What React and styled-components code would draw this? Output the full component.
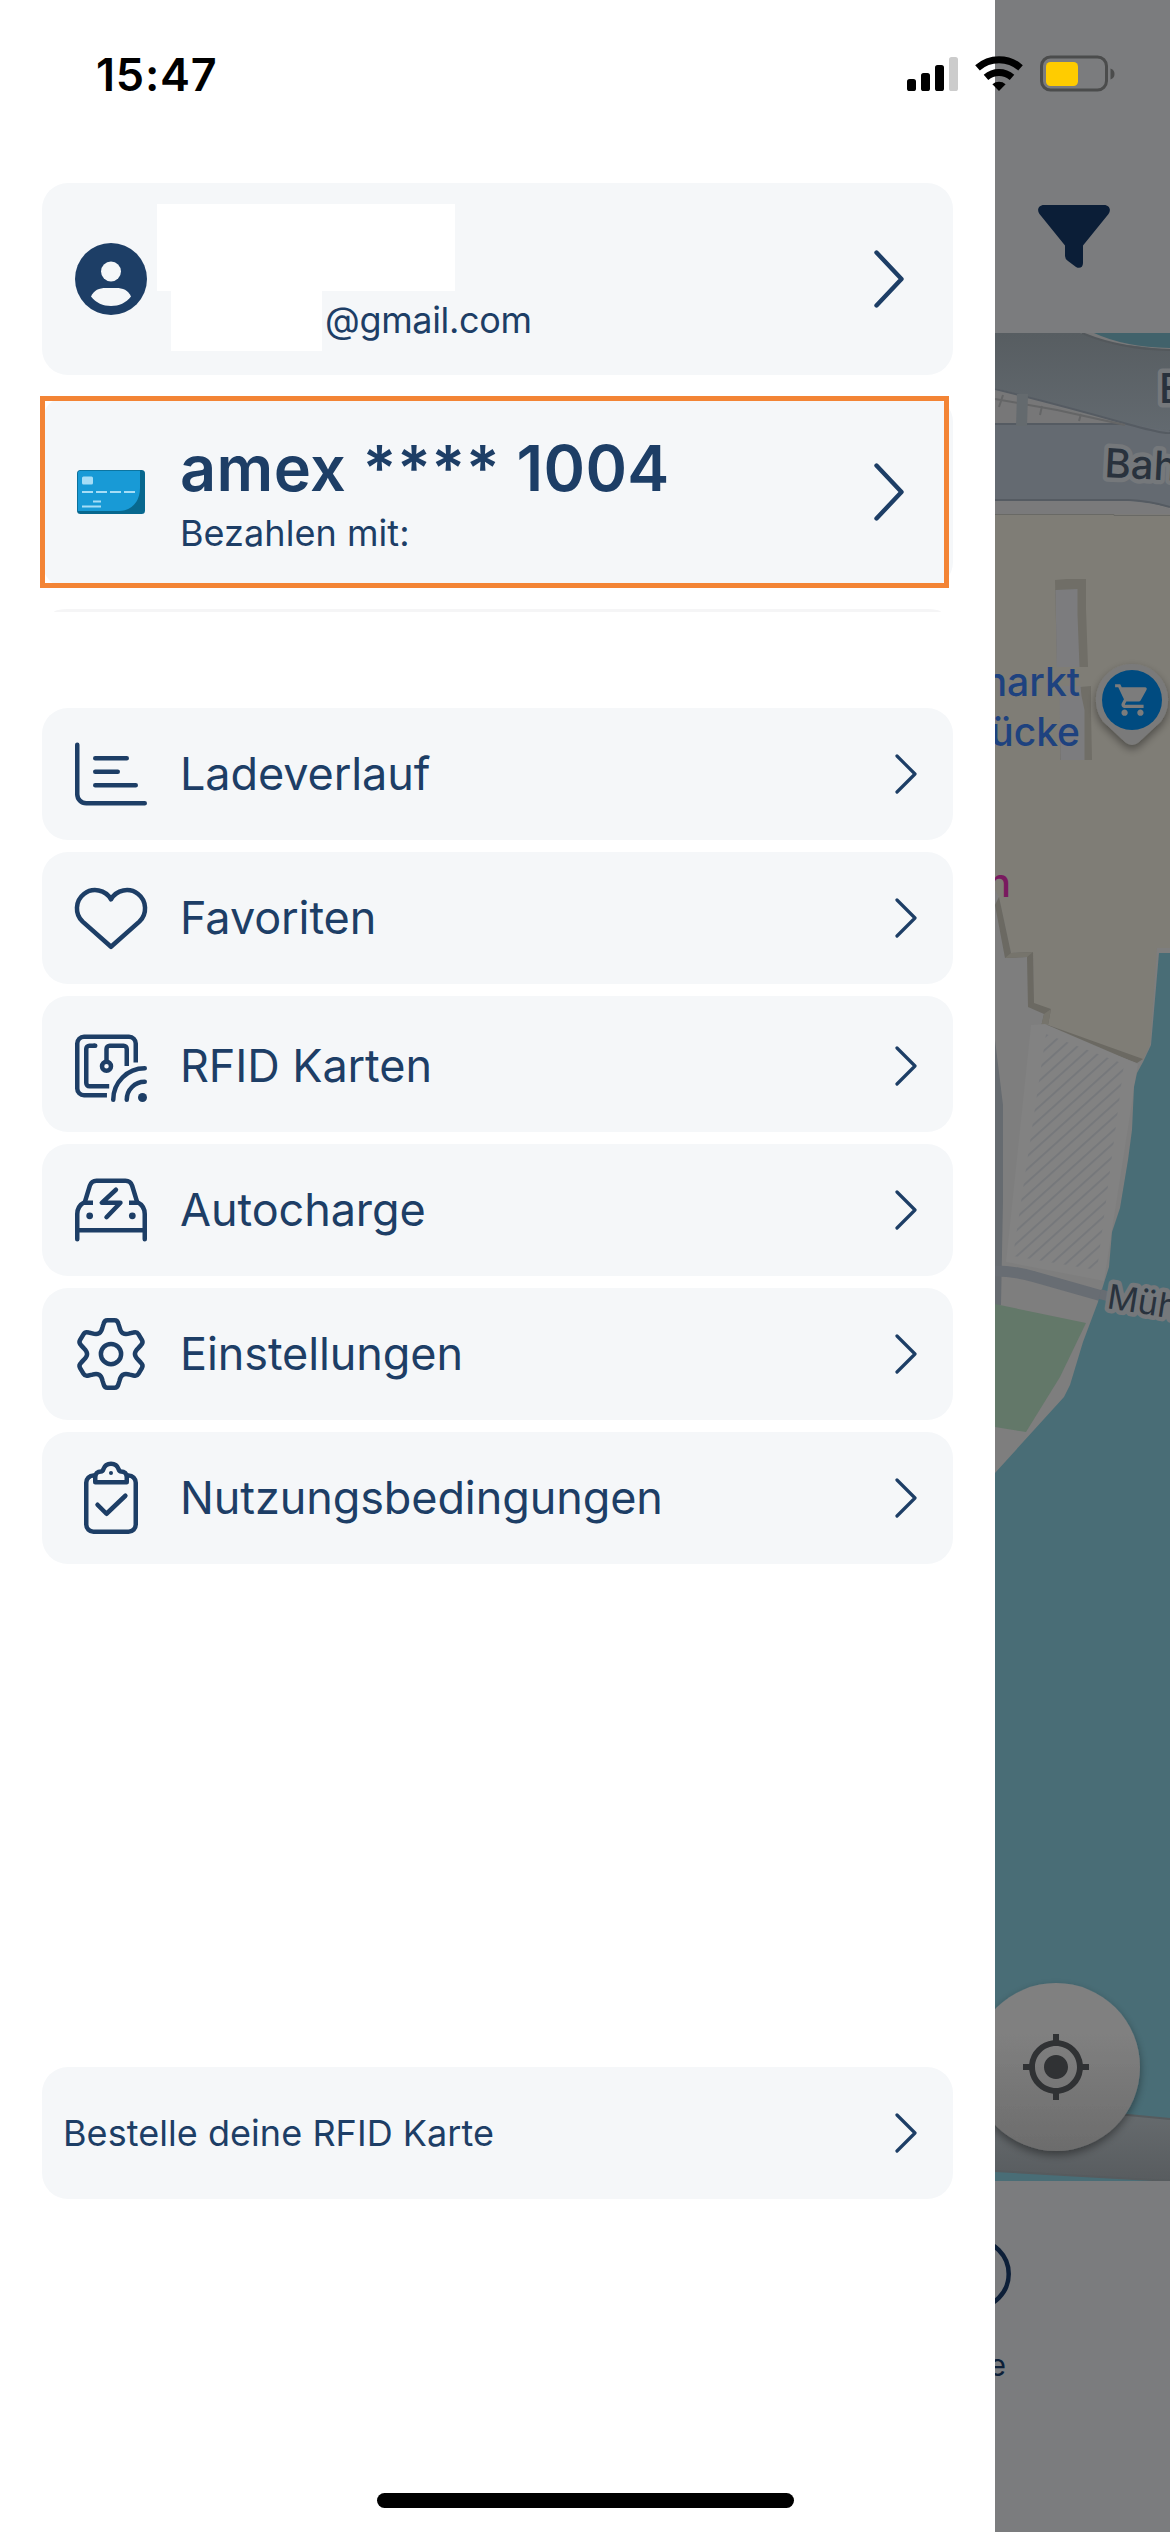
import React from "react";
import styled, { createGlobalStyle } from "styled-components";
import { MdMyLocation, MdShoppingCart } from "react-icons/md";

const NAVY = "#1d3e66";

// one tooth of the cog, repeated every 60 degrees around the origin
const cogPath = (() => {
  const tooth = [
    ["L", [-1.9, -5.9]],
    ["L", [-1.65, -6.7]],
    ["Q", [-1.45, -7.5], [-0.8, -7.5]],
    ["L", [0.8, -7.5]],
    ["Q", [1.45, -7.5], [1.65, -6.7]],
    ["L", [1.9, -5.9]],
    ["Q", [2.1, -4.95], [2.65, -4.6]],
    ["Q", [3.24, -4.3], [4.16, -4.6]],
  ];
  let d = "";
  for (let i = 0; i < 6; i++) {
    const a = (i * Math.PI) / 3;
    tooth.forEach(([cmd, ...pts], j) => {
      const list = pts
        .map(([x, y]) => [
          (x * Math.cos(a) - y * Math.sin(a)).toFixed(3),
          (x * Math.sin(a) + y * Math.cos(a)).toFixed(3),
        ])
        .join(" ");
      d += (i === 0 && j === 0 ? "M" : cmd) + list;
    });
  }
  return d + "Z";
})();

function LineIcon({ children }) {
  return (
    <IconSvg viewBox="0 0 16 16" fill="none" stroke={NAVY} strokeLinecap="round" strokeLinejoin="round">
      {children}
    </IconSvg>
  );
}

const icons = {
  chart: (
    <LineIcon>
      <path d="M.5 1.5v11a2 2 0 0 0 2 2h13M4.5 4.5h7M4.5 7.5h5M4.5 10.5h9" />
    </LineIcon>
  ),
  heart: (
    <LineIcon>
      <path d="M8 14.4L1.7 8.8A4.05 4.05 0 1 1 8 3.85A4.05 4.05 0 1 1 14.3 8.8Z" />
    </LineIcon>
  ),
  rfid: (
    <LineIcon>
      <path
        strokeLinecap="butt"
        d="M13.5 7.2V3A1.5 1.5 0 0 0 12 1.5H2A1.5 1.5 0 0 0 .5 3v10A1.5 1.5 0 0 0 2 14.5h5.1M7.6 12.5H3.2a.7.7 0 0 1-.7-.7V4.2a.7.7 0 0 1 .7-.7h1.3M7 7V4.2a.7.7 0 0 1 .7-.7h3.1a.7.7 0 0 1 .7.7V8"
      />
      <path d="M4.3 3.5h.2M15.5 8.5a7 7 0 0 0-7 7M15.5 11.5a4 4 0 0 0-4 4" />
      <circle cx="7" cy="8.05" r="1" />
      <circle cx="15" cy="15" r="1" fill={NAVY} stroke="none" />
    </LineIcon>
  ),
  car: (
    <LineIcon>
      <path d="M.5 14.5V8.9C.5 7.4 1.2 6.7 2.2 6.2L3.3 2.6A1.6 1.6 0 0 1 4.8 1.5h6.4a1.6 1.6 0 0 1 1.5 1.1l1.1 3.6c1 .5 1.7 1.2 1.7 2.7v5.6" />
      <path strokeLinecap="butt" d="M.5 12.5h15M2 6.4h2M12 6.4h2" />
      <path d="M9.1 3.5L5.95 6.4h4.15L7 9.6" />
      <circle cx="3.26" cy="9.3" r=".75" fill={NAVY} stroke="none" />
      <circle cx="12.74" cy="9.3" r=".75" fill={NAVY} stroke="none" />
    </LineIcon>
  ),
  cog: (
    <LineIcon>
      <path d={cogPath} transform="translate(8 8)" />
      <circle cx="8" cy="8" r="2.25" />
    </LineIcon>
  ),
  clipboard: (
    <LineIcon>
      <path d="M4.5 3h-.4A1.6 1.6 0 0 0 2.5 4.6v9.3a1.6 1.6 0 0 0 1.6 1.6h7.8a1.6 1.6 0 0 0 1.6-1.6V4.6A1.6 1.6 0 0 0 11.9 3h-.4" />
      <path d="M4.5 4.5V3.3c0-.7.5-1.2 1.3-1.2.2 0 .4-.2.5-.5a1.8 1.8 0 0 1 3.4 0c.1.3.3.5.5.5.8 0 1.3.5 1.3 1.2v1.2Z" />
      <path d="M5 9.5l2 2 4.2-4" />
      <circle cx="8" cy="2.45" r=".45" fill={NAVY} stroke="none" />
    </LineIcon>
  ),
};

const menu = [
  { label: "Ladeverlauf", icon: "chart" },
  { label: "Favoriten", icon: "heart" },
  { label: "RFID Karten", icon: "rfid", tall: true },
  { label: "Autocharge", icon: "car" },
  { label: "Einstellungen", icon: "cog" },
  { label: "Nutzungsbedingungen", icon: "clipboard" },
];

function Chevron({ large }) {
  return large ? (
    <ChevronSvg $w={30} $h={58} $right={49} viewBox="0 0 30 58">
      <path d="M2.5 2.5L27.5 29L2.5 55.5" strokeWidth="4.4" />
    </ChevronSvg>
  ) : (
    <ChevronSvg $w={22} $h={40} $right={36} viewBox="0 0 22 40">
      <path d="M2 2L20 20L2 38" strokeWidth="3.2" />
    </ChevronSvg>
  );
}

function StatusBar() {
  return (
    <Status>
      <Time>15:47</Time>
      <svg width="206" height="38" viewBox="0 0 206 38">
        <rect x="1" y="25" width="9" height="12" rx="2.6" />
        <rect x="15" y="19" width="9" height="18" rx="2.6" />
        <rect x="29" y="11" width="9" height="26" rx="2.6" />
        <rect x="43" y="3" width="9" height="34" rx="2.6" fill="#cccccc" />
        <g fill="none" stroke="#000" strokeWidth="7">
          <path d="M71.5 13.8a32.5 32.5 0 0 1 43 0" />
          <path d="M80 23.3a20 20 0 0 1 26 0" />
        </g>
        <path d="M93 37l-6.6-6.8a10 10 0 0 1 13.2 0Z" />
        <rect x="135.5" y="3" width="65" height="33" rx="9" fill="none" stroke="#4b4c4c" strokeWidth="3" />
        <rect x="140" y="8" width="32" height="24" rx="4.5" fill="#ffcc00" />
        <path d="M204.5 14.5v11c3-1 4-3.2 4-5.5s-1-4.5-4-5.5" fill="#4b4c4c" />
      </svg>
    </Status>
  );
}

function CityMap() {
  return (
    <MapSvg viewBox="995 333 175 1848" width="175" height="1848">
      <defs>
        <pattern id="hatch" width="9.6" height="9.6" patternUnits="userSpaceOnUse" patternTransform="rotate(48)">
          <rect width="2" height="9.6" fill="#76787b" />
        </pattern>
        <linearGradient id="road" x1="0" y1="0" x2="0" y2="1">
          <stop offset="0" stopColor="#575d61" />
          <stop offset="1" stopColor="#636a70" />
        </linearGradient>
        <linearGradient id="quay" x1="0" y1="0" x2="0" y2="1">
          <stop offset="0" stopColor="#696e71" />
          <stop offset="1" stopColor="#585c5f" />
        </linearGradient>
        <linearGradient id="fab" x1="0" y1="0" x2="0" y2="1">
          <stop offset=".3" stopColor="#808080" />
          <stop offset="1" stopColor="#6c6c6c" />
        </linearGradient>
        <filter id="shadow" x="-30%" y="-30%" width="160%" height="170%">
          <feDropShadow dx="0" dy="4" stdDeviation="4" floodOpacity=".4" />
        </filter>
      </defs>
      <rect x="995" y="333" width="175" height="1848" fill="#7e7e7e" />

      {/* railway and roads */}
      <path d="M995 333h175v100H995Z" fill="#777879" />
      <path d="M995 333H1080L1110 343L1170 350V434L1120 422L995 388Z" fill="url(#road)" />
      <path d="M1094 333h76v15q-46-1-76-15Z" fill="#41626b" />
      <path d="M1082 333q38 16 88 17" fill="none" stroke="#53585c" strokeWidth="2" />
      <path d="M995 424h135l40 7v76q-20-4-40-5.500H995Z" fill="#646a71" />
      <path d="M995 391L1040 402Q1100 420 1128 424H995Z" fill="#777778" />
      <path d="M995 389Q1060 405 1120 422T1170 430M995 424h125M995 500h133q22 1 42 7" fill="none" stroke="#555b62" strokeWidth="2" />
      <path d="M995 399l62 11 68 15M1003 395l-4 12M1042 406l-2 9M1081 414l-2 7" fill="none" stroke="#646566" strokeWidth="2" />
      <path d="M1017 394h11l-1 32h-11Z" fill="#646a6e" />
      <path d="M995 501h133q22 1 42 8v6H995Z" fill="#7a7a7b" />

      {/* quarter */}
      <path d="M995 514.5H1170V948H1157L1150 1045L1143 1060L1048 1025L1051 1009L1034 1005L1033 952L1011 953L999 897L995 890Z" fill="#7f7d76" />
      <path d="M995 514.5h119v1h56" fill="none" stroke="#696965" />
      <path d="M999 897L1011 953L1033 952L1034 1003L1051 1009L1048 1025L1143 1059L1137 1063L1041 1027L1044 1014L1028 1007L1027 957L1005 958L995 905Z" fill="#6b6962" />
      <path d="M1011 953L1033 952L1027 957L1005 958ZM1051 1009L1048 1025L1041 1027L1044 1014Z" fill="#76746c" />
      <path d="M1055 580l12-1h19v30l2 58h-31Z" fill="#706e67" />
      <path d="M1055.5 590l22-1v25l2 53h-23v-17Z" fill="#7c7c7e" />
      <path d="M1080 687l11-1v26l1 48h-32v-74Z" fill="#706e67" />
      <path d="M1059.5 686h21l1 10 3 14v50h-24Z" fill="#7c7c7e" />

      {/* parking lot */}
      <path d="M1031 1025L1045 1024L1138 1064L1104 1281L1006 1262Z" fill="#828282" />
      <path d="M1046 1034L1124 1064L1097 1270L1013 1256Z" fill="url(#hatch)" />
      <path d="M995 1040L1003 1105V1200L1001 1305H995Z" fill="#666b70" />
      <path d="M995 1271q20 0 40 6l74 21" fill="none" stroke="#686d73" strokeWidth="11" />
      <path d="M995 1304L1086 1323L1060 1377L1026 1432L995 1427Z" fill="#637869" />

      {/* river */}
      <path d="M1170 953H1159L1151 1045L1143 1062L1137 1073L1134 1087L1132 1130L1128 1160L1120 1208L1112 1232L1109 1267L1098 1302L1083 1342L1070 1385L1064 1397L995 1473V2181H1170Z" fill="#496d76" />
      <path d="M1100 1294l14 4" stroke="#686d73" strokeWidth="10" />
      <path d="M995 2098L1128 2115L1170 2119V2181L995 2171Z" fill="url(#quay)" />
      <path d="M1110 2113l18 2 42 4M995 2171l175 10" fill="none" stroke="#565b5e" strokeWidth="2" />

      <MapLabel x="1159" y="403" $size={41} $weight={500} $halo>E</MapLabel>
      <MapLabel x="1104" y="477" $size={40} $weight={500} $halo transform="rotate(3 1104 477)">Bah</MapLabel>
      <MapLabel x="1106" y="1308" $size={34} $halo transform="rotate(9 1106 1308)">Müh</MapLabel>
      <MapLabel x="1080" y="696" $size={39} $weight={500} $color="#1e427f" textAnchor="end">markt</MapLabel>
      <MapLabel x="1080" y="746" $size={39} $weight={500} $color="#1e427f" textAnchor="end">ücke</MapLabel>
      <MapLabel x="1011" y="897" $size={40} $weight={500} $color="#791a5f" textAnchor="end">n</MapLabel>

      <g filter="url(#shadow)">
        <path d="M1132 664a36 36 0 0 1 29 57.5L1139 742q-7 6-14 0L1103 721.5A36 36 0 0 1 1132 664Z" fill="#7a7a7a" />
      </g>
      <circle cx="1132" cy="700" r="30" fill="#004b80" />
      <MdShoppingCart x="1113.5" y="681" size={38} color="#7c7c7c" />

      <circle cx="1056" cy="2067" r="84" fill="url(#fab)" filter="url(#shadow)" />
      <MdMyLocation x="1020" y="2031" size={72} color="#303234" />
    </MapSvg>
  );
}

export default function App() {
  return (
    <>
      <GlobalStyle />
      <Screen>
        <Drawer>
          <Card $height={192}>
            <Avatar viewBox="0 0 72 72">
              <circle cx="36" cy="36" r="36" fill={NAVY} />
              <circle cx="36" cy="28.5" r="10" fill="#f5f7f9" />
              <path d="M16 53.5C19 47 24 45 31 45h10c7 0 12 2 15 8.500C51 60 44 63 36 63s-15-3-20-9.500Z" fill="#f5f7f9" />
            </Avatar>
            <Account>
              <Blank $w={298} $h={87} />
              <Email>
                <Blank $w={151} $h={60} />
                <SmallText $spacing="-0.35px">@gmail.com</SmallText>
              </Email>
            </Account>
            <Chevron large />
          </Card>
          <Card $height={192} $marked>
            <CardSlot>
              <svg width="68" height="44" viewBox="0 0 68 44">
                <rect width="68" height="44" rx="3.5" fill="#08688f" />
                <path d="M3.500 .8H63V18C63 32 54 41 42 41H.8V3.500Q.8.8 3.500.8Z" fill="#189ad6" />
                <rect x="5" y="6.5" width="11" height="8" rx="1.5" fill="#a6ddf6" />
                <path d="M5 22h11M19 22h11M33 22h11M47 22h11M16 31.500h8M5 36.500h19" stroke="#a6ddf6" strokeWidth="2" />
              </svg>
            </CardSlot>
            <Payment>
              <PaymentName>amex **** 1004</PaymentName>
              <SmallText>Bezahlen mit:</SmallText>
            </Payment>
            <Chevron large />
          </Card>
          <Divider />
          <Menu>
            {menu.map((item) => (
              <Card key={item.label} $height={item.tall ? 136 : 132} $tall={item.tall}>
                {icons[item.icon]}
                <Label>{item.label}</Label>
                <Chevron />
              </Card>
            ))}
          </Menu>
          <OrderCard $height={132}>
            <SmallText>Bestelle deine RFID Karte</SmallText>
            <Chevron />
          </OrderCard>
        </Drawer>
        <Behind>
          <TopBar>
            <svg width="74" height="66" viewBox="0 0 74 66">
              <path d="M7 1H67C72.500 1 74.500 6 71.500 10L46 41.500V59C46 63.500 42.500 65 39 63L31 57Q28 55 28 52V41.500L2.500 10C-.5 6 1.500 1 7 1Z" fill="#0b1e37" />
            </svg>
          </TopBar>
          <CityMap />
          <TabBar>
            <TabRing viewBox="0 0 16 72">
              <circle cx="-20" cy="36" r="33.7" fill="none" stroke="#0d1f38" strokeWidth="4.5" />
            </TabRing>
            <TabLabel>e</TabLabel>
          </TabBar>
        </Behind>
        <StatusBar />
        <HomeIndicator />
      </Screen>
    </>
  );
}

const GlobalStyle = createGlobalStyle`
  body {
    margin: 0;
    background: #fff;
    font-family: Inter, "Liberation Sans", sans-serif;
  }
`;

const Screen = styled.div`
  position: relative;
  display: flex;
  width: 1170px;
  height: 2532px;
  overflow: hidden;
`;

const Drawer = styled.aside`
  display: flex;
  flex-direction: column;
  box-sizing: border-box;
  width: 995px;
  padding: 183px 42px 333px;
  background: #fff;
`;

const Card = styled.div`
  position: relative;
  display: flex;
  align-items: center;
  flex-shrink: 0;
  box-sizing: border-box;
  height: ${(p) => p.$height}px;
  padding: ${(p) => (p.$tall ? "4px 0 0 33px" : "0 0 0 33px")};
  border-radius: 26px;
  background: #f5f7f9;
  ${(p) =>
    p.$marked &&
    `
    margin-top: 21px;
    &::after {
      content: "";
      position: absolute;
      inset: 0 4px 0 -2px;
      border: 5px solid #f38435;
    }
  `}
`;

const OrderCard = styled(Card)`
  margin-top: auto;
  padding-left: 21px;
`;

const Avatar = styled.svg`
  width: 72px;
  height: 72px;
`;

const IconSvg = styled.svg`
  width: 72px;
  height: 72px;
  overflow: visible;
`;

const ChevronSvg = styled.svg`
  width: ${(p) => p.$w}px;
  height: ${(p) => p.$h}px;
  margin-left: auto;
  margin-right: ${(p) => p.$right}px;
  fill: none;
  stroke: ${NAVY};
  stroke-linecap: round;
  stroke-linejoin: round;
`;

const Account = styled.div`
  align-self: flex-start;
  margin: 21px 0 0 10px;
`;

const Email = styled.div`
  display: flex;
  align-items: center;
  gap: 3px;
  height: 60px;
  margin-left: 14px;

  span {
    padding-bottom: 2px;
  }
`;

const Blank = styled.div`
  width: ${(p) => p.$w}px;
  height: ${(p) => p.$h}px;
  background: #fff;
`;

const SmallText = styled.span`
  color: ${NAVY};
  font-size: 36px;
  line-height: 44px;
  letter-spacing: ${(p) => p.$spacing || "0.05px"};
  white-space: nowrap;
`;

const CardSlot = styled.div`
  display: flex;
  width: 72px;
  padding-left: 2px;
  box-sizing: border-box;
`;

const Payment = styled.div`
  display: flex;
  flex-direction: column;
  gap: 5px;
  margin-left: 33px;
`;

const PaymentName = styled.strong`
  color: ${NAVY};
  font-size: 63px;
  font-weight: 600;
  line-height: 76px;
  letter-spacing: 0.4px;
`;

const Divider = styled.div`
  height: 3px;
  margin: 21px 12px 0;
  border-radius: 14px 14px 0 0 / 3px 3px 0 0;
  background: #f5f5f6;
`;

const Menu = styled.nav`
  display: flex;
  flex-direction: column;
  gap: 12px;
  margin-top: 96px;
`;

const Label = styled.span`
  margin-left: 33px;
  color: ${NAVY};
  font-size: 45px;
  line-height: 54px;
  letter-spacing: -0.1px;
  white-space: nowrap;
`;

const Behind = styled.div`
  display: flex;
  flex-direction: column;
  width: 175px;
  background: #7b7c7e;
`;

const TopBar = styled.div`
  display: flex;
  box-sizing: border-box;
  height: 333px;
  padding: 204px 0 0 42px;
`;

const MapSvg = styled.svg`
  display: block;
  flex-shrink: 0;
`;

const MapLabel = styled.text`
  font-family: Inter, sans-serif;
  font-size: ${(p) => p.$size}px;
  font-weight: ${(p) => p.$weight || 400};
  fill: ${(p) => p.$color || "#29323d"};
  stroke: ${(p) => (p.$halo ? "#75787b" : "none")};
  stroke-width: 9px;
  stroke-linejoin: round;
  paint-order: stroke;
`;

const TabBar = styled.div`
  display: flex;
  flex-direction: column;
  padding-top: 57px;
`;

const TabRing = styled.svg`
  width: 16px;
  height: 72px;
`;

const TabLabel = styled.span`
  width: 11px;
  margin-top: 37px;
  overflow: hidden;
  direction: rtl;
  color: #0d1f38;
  font-size: 30px;
  line-height: 36px;
`;

const Status = styled.header`
  position: absolute;
  top: 54px;
  left: 0;
  display: flex;
  align-items: center;
  justify-content: space-between;
  box-sizing: border-box;
  width: 1170px;
  height: 38px;
  padding: 0 58px 0 96px;

  svg {
    overflow: visible;
  }
`;

const Time = styled.time`
  padding-top: 3px;
  color: #000;
  font-size: 45px;
  font-weight: 600;
  line-height: 54px;
  letter-spacing: 0.8px;
`;

const HomeIndicator = styled.div`
  position: absolute;
  bottom: 24px;
  left: 377px;
  width: 417px;
  height: 15px;
  border-radius: 8px;
  background: #000;
`;
